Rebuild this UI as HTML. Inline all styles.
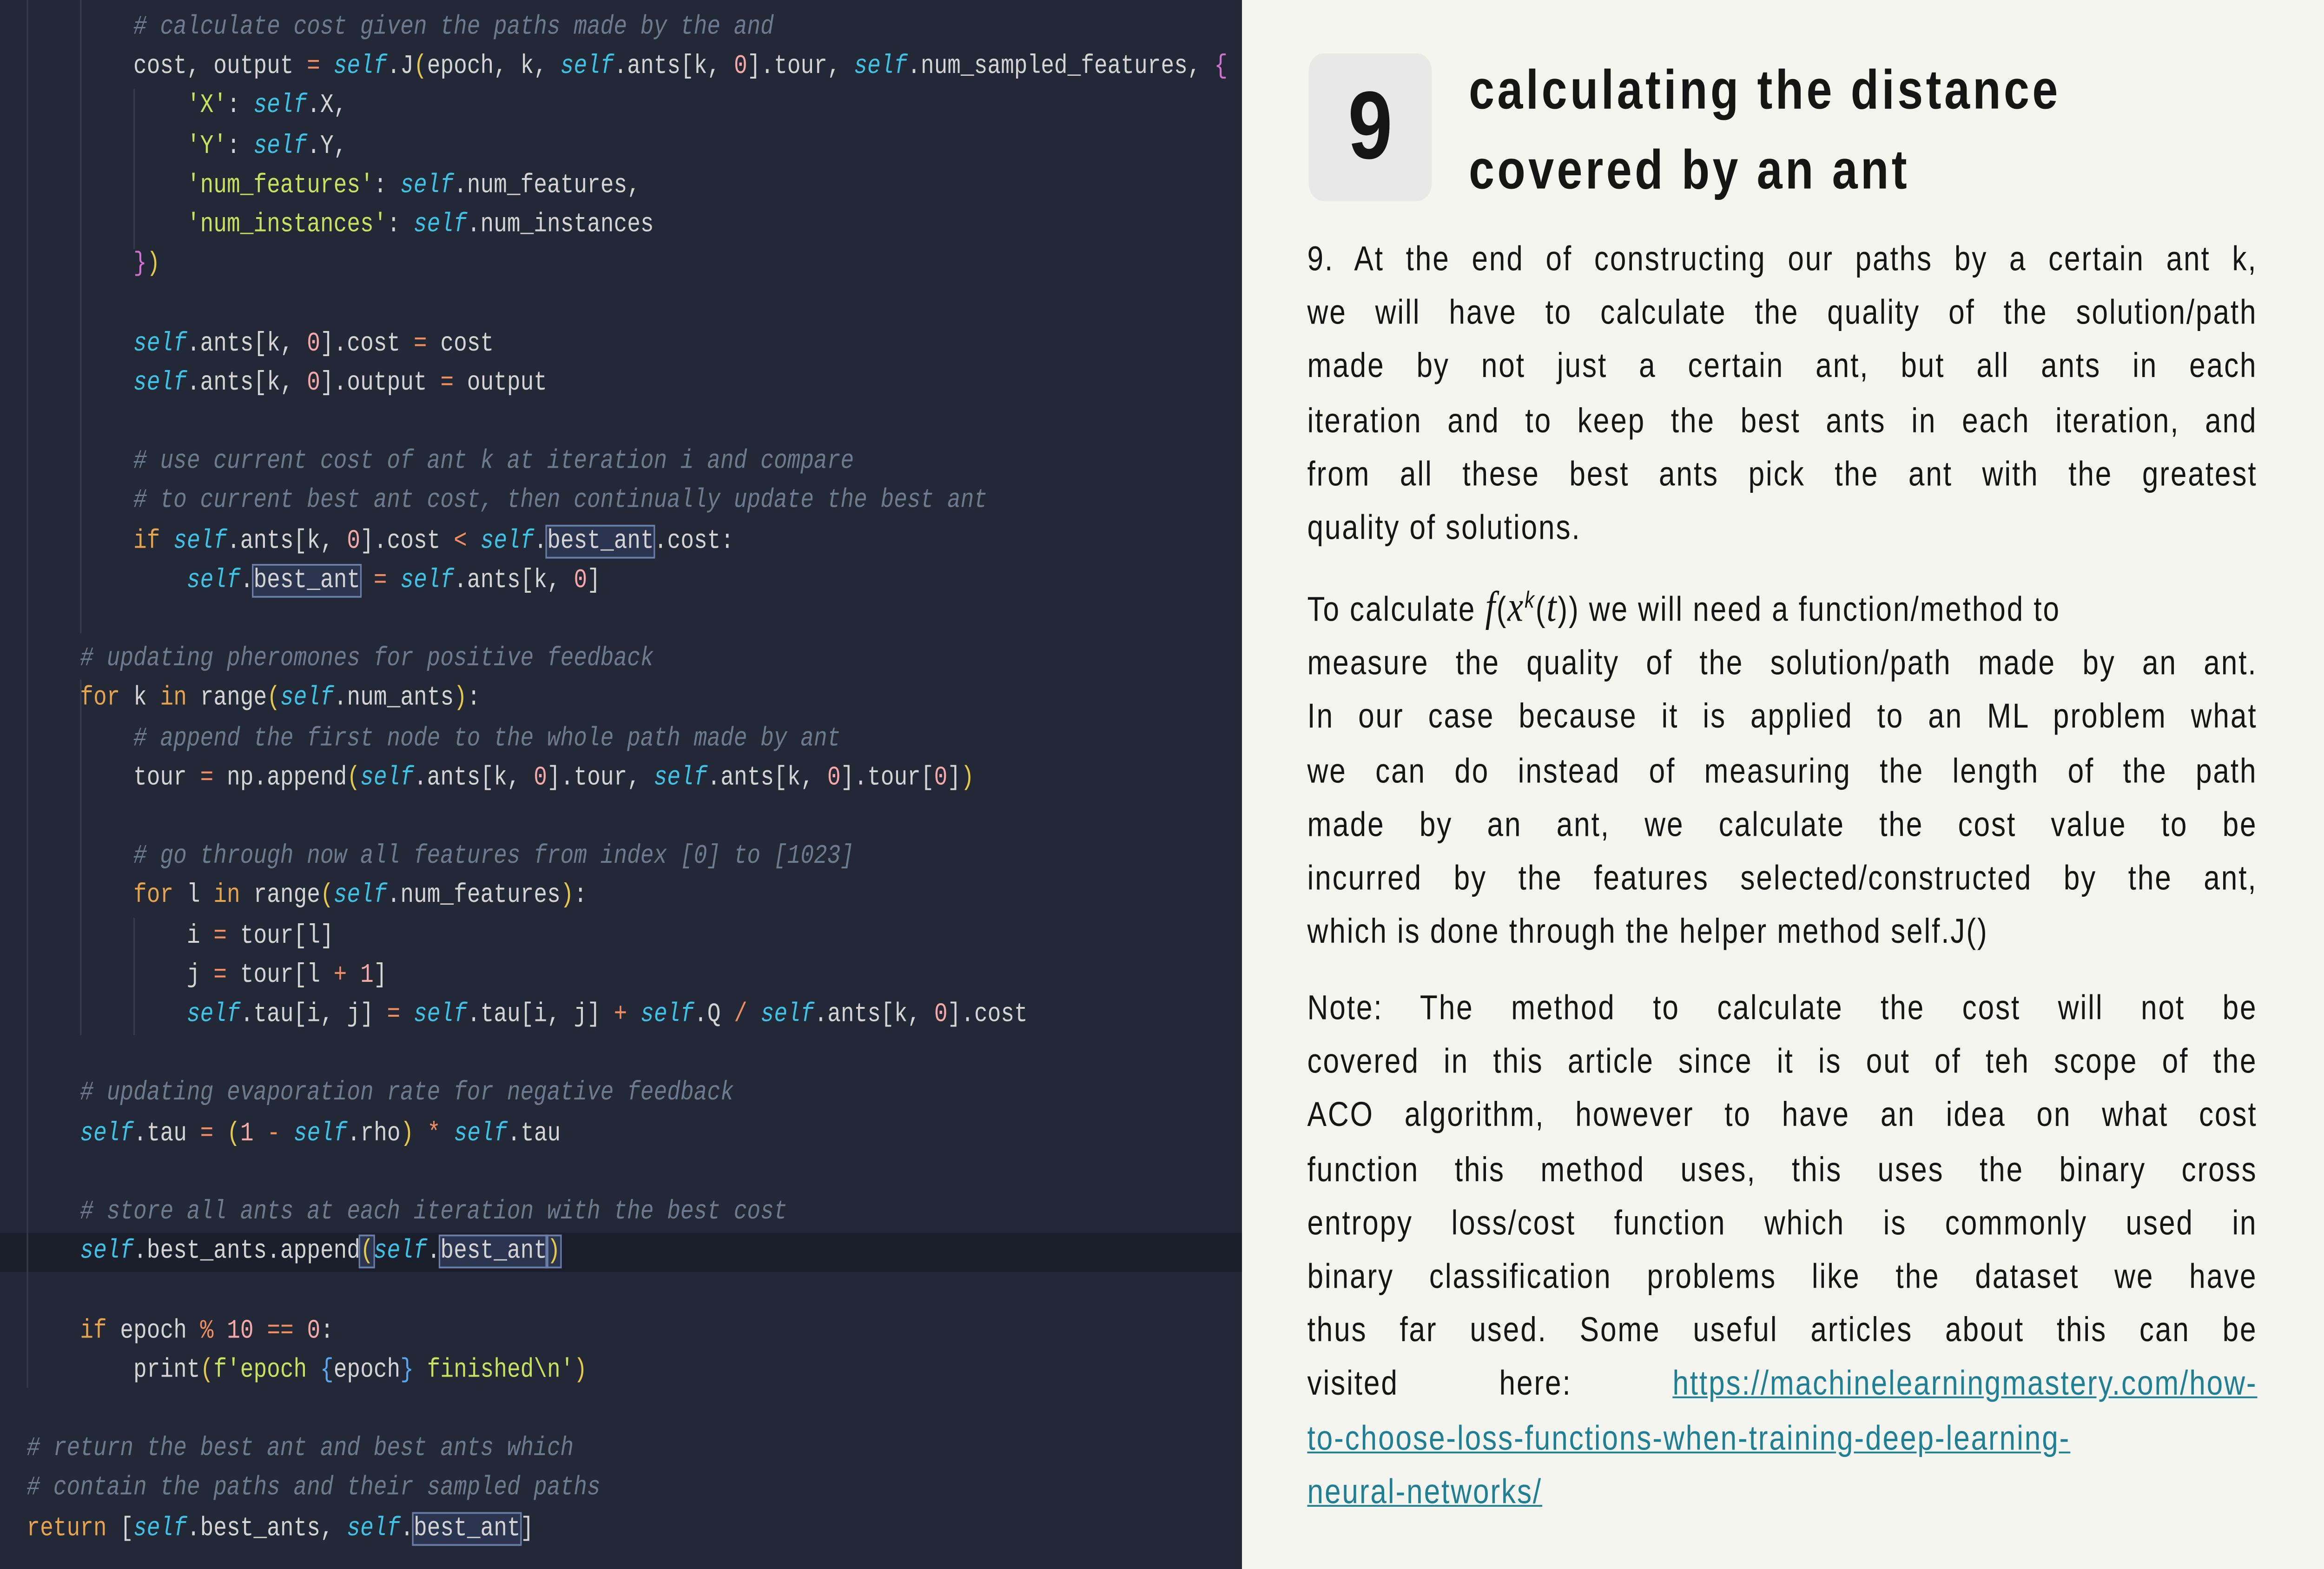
<!DOCTYPE html>
<html><head><meta charset="utf-8">
<style>
html,body{margin:0;padding:0;width:100vw;height:100vh;overflow:hidden;background:#f5f5ef;}
#w{position:absolute;left:0;top:0;width:1568px;height:882px;transform:scale(3.188776,3.826531);transform-origin:0 0;}
#code{position:absolute;left:0;top:0;width:838px;height:882px;background:#232836;overflow:hidden;}
.ln{position:absolute;left:18px;height:22.2px;line-height:22.2px;font-family:"Liberation Mono","DejaVu Sans Mono",monospace;font-size:15px;color:#d4d4d4;white-space:pre;}
.c{color:#6d7b8e;font-style:italic}
.s{color:#3ec3e6;font-style:italic}
.k{color:#e8a34e}
.st{color:#c9e15f}
.o{color:#f08d63}
.n{color:#f5a8a8}
.p1{color:#e6c84a}.p2{color:#d070d0}.p3{color:#5aa6f0}
.bx{outline:1px solid #6a7fa8;background:#2c3550}
.g{position:absolute;width:1px;background:#343a4a}
#hl{position:absolute;left:0;top:693px;width:838px;height:22px;background:#1b1f2b}
#r{position:absolute;left:838px;top:0;width:730px;height:882px;background:#f5f5ef;font-family:"Liberation Sans",sans-serif;color:#151515}
#box{position:absolute;left:45px;top:30px;width:83px;height:83px;background:#e8e8e8;border-radius:10px;text-align:center;line-height:83px;font-size:54px;font-weight:bold}
.t{position:absolute;left:153px;font-size:31px;font-weight:bold;letter-spacing:2px;white-space:nowrap}
.b{position:absolute;left:44px;width:641px;font-size:19.5px;letter-spacing:0.9px;line-height:30.2px}
.b > span{display:block;text-align:justify;text-align-last:justify;height:30.2px;white-space:nowrap}
.b > span.l{text-align-last:left}
a{color:#1f7f95;text-decoration:underline}
.m{font-family:"Liberation Serif",serif;font-style:italic;font-size:24px;line-height:0}
</style></head><body><div id="w">
<div id="code">
<div id="hl"></div>
<div class="g" style="left:18px;top:0;height:780px"></div>
<div class="g" style="left:54px;top:0;height:356px"></div>
<div class="g" style="left:54px;top:382px;height:200px"></div>
<div class="g" style="left:90px;top:50px;height:90px"></div>
<div class="g" style="left:90px;top:516px;height:66px"></div>
<div class="ln" style="top:5px">        <span class="c"># calculate cost given the paths made by the and</span></div>
<div class="ln" style="top:27.2px">        cost, output <span class="o">=</span> <span class="s">self</span>.J<span class="p1">(</span>epoch, k, <span class="s">self</span>.ants[k, <span class="n">0</span>].tour, <span class="s">self</span>.num_sampled_features, <span class="p2">{</span></div>
<div class="ln" style="top:49.4px">            <span class="st">'X'</span>: <span class="s">self</span>.X,</div>
<div class="ln" style="top:71.6px">            <span class="st">'Y'</span>: <span class="s">self</span>.Y,</div>
<div class="ln" style="top:93.8px">            <span class="st">'num_features'</span>: <span class="s">self</span>.num_features,</div>
<div class="ln" style="top:116px">            <span class="st">'num_instances'</span>: <span class="s">self</span>.num_instances</div>
<div class="ln" style="top:138.2px">        <span class="p2">}</span><span class="p1">)</span></div>
<div class="ln" style="top:182.6px">        <span class="s">self</span>.ants[k, <span class="n">0</span>].cost <span class="o">=</span> cost</div>
<div class="ln" style="top:204.8px">        <span class="s">self</span>.ants[k, <span class="n">0</span>].output <span class="o">=</span> output</div>
<div class="ln" style="top:249.2px">        <span class="c"># use current cost of ant k at iteration i and compare</span></div>
<div class="ln" style="top:271.4px">        <span class="c"># to current best ant cost, then continually update the best ant</span></div>
<div class="ln" style="top:293.6px">        <span class="k">if</span> <span class="s">self</span>.ants[k, <span class="n">0</span>].cost <span class="o">&lt;</span> <span class="s">self</span>.<span class="bx">best_ant</span>.cost:</div>
<div class="ln" style="top:315.8px">            <span class="s">self</span>.<span class="bx">best_ant</span> <span class="o">=</span> <span class="s">self</span>.ants[k, <span class="n">0</span>]</div>
<div class="ln" style="top:360.2px">    <span class="c"># updating pheromones for positive feedback</span></div>
<div class="ln" style="top:382.4px">    <span class="k">for</span> k <span class="k">in</span> range<span class="p1">(</span><span class="s">self</span>.num_ants<span class="p1">)</span>:</div>
<div class="ln" style="top:404.6px">        <span class="c"># append the first node to the whole path made by ant</span></div>
<div class="ln" style="top:426.8px">        tour <span class="o">=</span> np.append<span class="p1">(</span><span class="s">self</span>.ants[k, <span class="n">0</span>].tour, <span class="s">self</span>.ants[k, <span class="n">0</span>].tour[<span class="n">0</span>]<span class="p1">)</span></div>
<div class="ln" style="top:471.2px">        <span class="c"># go through now all features from index [0] to [1023]</span></div>
<div class="ln" style="top:493.4px">        <span class="k">for</span> l <span class="k">in</span> range<span class="p1">(</span><span class="s">self</span>.num_features<span class="p1">)</span>:</div>
<div class="ln" style="top:515.6px">            i <span class="o">=</span> tour[l]</div>
<div class="ln" style="top:537.8px">            j <span class="o">=</span> tour[l <span class="o">+</span> <span class="n">1</span>]</div>
<div class="ln" style="top:560px">            <span class="s">self</span>.tau[i, j] <span class="o">=</span> <span class="s">self</span>.tau[i, j] <span class="o">+</span> <span class="s">self</span>.Q <span class="o">/</span> <span class="s">self</span>.ants[k, <span class="n">0</span>].cost</div>
<div class="ln" style="top:604.4px">    <span class="c"># updating evaporation rate for negative feedback</span></div>
<div class="ln" style="top:626.6px">    <span class="s">self</span>.tau <span class="o">=</span> <span class="p1">(</span><span class="n">1</span> <span class="o">-</span> <span class="s">self</span>.rho<span class="p1">)</span> <span class="o">*</span> <span class="s">self</span>.tau</div>
<div class="ln" style="top:671px">    <span class="c"># store all ants at each iteration with the best cost</span></div>
<div class="ln" style="top:693.2px">    <span class="s">self</span>.best_ants.append<span class="bx"><span class="p1">(</span></span><span class="s">self</span>.<span class="bx">best_ant</span><span class="bx"><span class="p1">)</span></span></div>
<div class="ln" style="top:737.6px">    <span class="k">if</span> epoch <span class="o">%</span> <span class="n">10</span> <span class="o">==</span> <span class="n">0</span>:</div>
<div class="ln" style="top:759.8px">        print<span class="p1">(</span><span class="st">f'epoch </span><span class="p3">{</span>epoch<span class="p3">}</span><span class="st"> finished\n'</span><span class="p1">)</span></div>
<div class="ln" style="top:804.2px"><span class="c"># return the best ant and best ants which</span></div>
<div class="ln" style="top:826.4px"><span class="c"># contain the paths and their sampled paths</span></div>
<div class="ln" style="top:848.6px"><span class="k">return</span> [<span class="s">self</span>.best_ants, <span class="s">self</span>.<span class="bx">best_ant</span>]</div>
</div>
<div id="r">
<div id="box">9</div>
<div class="t" style="top:33px">calculating the distance</div>
<div class="t" style="top:78px">covered by an ant</div>
<div class="b" style="top:131px">
<span>9. At the end of constructing our paths by a certain ant k,</span>
<span>we will have to calculate the quality of the solution/path</span>
<span>made by not just a certain ant, but all ants in each</span>
<span>iteration and to keep the best ants in each iteration, and</span>
<span>from all these best ants pick the ant with the greatest</span>
<span class="l">quality of solutions.</span>
</div>
<div class="b" style="top:328px">
<span class="l">To calculate <i class="m">f</i>(<i class="m">x</i><sup style="font-size:13px;font-style:italic;line-height:0">k</sup>(<i class="m">t</i>)) we will need a function/method to</span>
<span>measure the quality of the solution/path made by an ant.</span>
<span>In our case because it is applied to an ML problem what</span>
<span>we can do instead of measuring the length of the path</span>
<span>made by an ant, we calculate the cost value to be</span>
<span>incurred by the features selected/constructed by the ant,</span>
<span class="l">which is done through the helper method self.J()</span>
</div>
<div class="b" style="top:552px">
<span>Note: The method to calculate the cost will not be</span>
<span>covered in this article since it is out of teh scope of the</span>
<span>ACO algorithm, however to have an idea on what cost</span>
<span>function this method uses, this uses the binary cross</span>
<span>entropy loss/cost function which is commonly used in</span>
<span>binary classification problems like the dataset we have</span>
<span>thus far used. Some useful articles about this can be</span>
<span>visited here: <a>https://machinelearningmastery.com/how-</a></span>
<span class="l"><a>to-choose-loss-functions-when-training-deep-learning-</a></span>
<span class="l"><a>neural-networks/</a></span>
</div>
</div>
</div>
<script>
(function(){var w=document.documentElement.clientWidth||window.innerWidth,h=document.documentElement.clientHeight||window.innerHeight;if(w>0&&h>0){document.getElementById('w').style.transform='scale('+(w/1568)+','+(h/882)+')';}})();
</script>
</body></html>
